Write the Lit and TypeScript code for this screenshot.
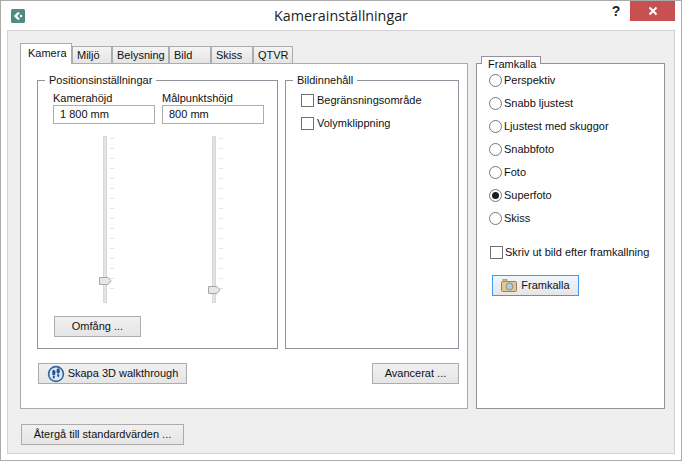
import { LitElement, html, svg, css, nothing } from "lit";
import { customElement } from "lit/decorators.js";

const TICKS = Array.from({ length: 16 }, (_, i) => i);

@customElement("app-root")
export class AppRoot extends LitElement {
  static styles = css`
    :host { display: block; width: 682px; height: 461px; box-sizing: border-box; background: #fff;
      border: 1px solid #ababab; font: 11px/15px "Liberation Sans", Arial, sans-serif; color: #111; overflow: hidden; }
    * { box-sizing: border-box; }
    .window { height: 100%; display: flex; flex-direction: column; }
    .titlebar { height: 29px; display: flex; align-items: flex-start; padding-left: 10px; flex: none; }
    .appicon { margin-top: 8px; flex: none; display: block; }
    .title { flex: 1; text-align: center; font: 14.3px/20px "Open Sans", sans-serif; margin-top: 5px; padding-left: 48px; color: #222; }
    .help { width: 14px; margin-top: 2px; margin-right: 7px; font: bold 14px/16px "Liberation Sans", sans-serif; text-align: center; color: #222; }
    .close { width: 45px; height: 20px; margin-right: 6px; background: #c75050; display: flex; align-items: center; justify-content: center; }
    .client { flex: 1; margin: 0 6px 6px 6px; border: 1px solid #d2d2d2; background: #efefef; padding: 12px 9px 7px 12px; display: flex; flex-direction: column; }
    .top { display: flex; gap: 8px; height: 366px; }
    .tabs { width: 448px; display: flex; flex-direction: column; }
    .tabbar { display: flex; height: 20px; align-items: flex-end; position: relative; z-index: 1; }
    .tab { height: 17px; border: 1px solid #acacac; border-bottom: none; background: linear-gradient(#f4f4f4, #e4e4e4); padding-left: 4px; line-height: 17px; flex: none; }
    .tab.active { height: 21px; margin: 0 0 -1px 0; background: #fff; padding-left: 7px; line-height: 19px; }
    .pane { flex: 1; background: #fff; border: 1px solid #acacac; padding: 16px 8px 0 16px; display: flex; flex-direction: column; }
    .groups { display: flex; gap: 7px; height: 269px; }
    .group { position: relative; border: 1px solid #92929c; flex: none; }
    .legend { position: absolute; top: -8px; background: #fff; padding: 0 4px; white-space: nowrap; }
    .pos { width: 241px; padding: 15px 0 0 15px; }
    .pos .legend { left: 7px; }
    .content { width: 174px; padding: 13px 0 0 15px; }
    .content .legend { left: 7px; }
    .fields { display: flex; gap: 7px; }
    .field { width: 102px; }
    .field label { display: block; height: 9px; line-height: 15px; position: relative; top: -5px; }
    .input { height: 19px; border: 1px solid #acacac; padding-left: 6px; line-height: 17px; }
    .slider { height: 167px; margin-top: 12px; position: relative; }
    .track { position: absolute; left: 50px; top: 0; bottom: 0; width: 4px; background: #e3e3e3; border: 1px solid #d8d8d8; }
    .ticks { position: absolute; left: 57px; top: 2px; display: flex; flex-direction: column; gap: 9px; }
    .tick { width: 4px; height: 1px; background: #e4e4ea; }
    .thumb { position: absolute; left: 46px; display: block; }
    .btn { height: 21px; border: 1px solid #acacac; background: linear-gradient(#f0f0f0, #e5e5e5); display: flex; align-items: center; justify-content: center; gap: 3px; white-space: nowrap; flex: none; }
    .omfang { width: 87px; margin: 13px 0 0 1px; }
    .check { display: flex; align-items: center; gap: 3px; height: 13px; white-space: nowrap; }
    .box { width: 13px; height: 13px; border: 1px solid #707070; background: #fff; flex: none; }
    .content .check { margin-bottom: 10px; }
    .actions { display: flex; justify-content: space-between; margin-top: 14px; padding-left: 1px; }
    .walk { width: 149px; }
    .adv { width: 87px; }
    .side { width: 189px; position: relative; display: flex; flex-direction: column; }
    .sidetab { position: absolute; left: 5px; top: 13px; width: 60px; height: 8px; padding-left: 6px; background: #fff; border: 1px solid #92929c; border-bottom: none; line-height: 15px; z-index: 1; }
    .sidepane { margin-top: 20px; flex: 1; background: #fff; border: 1px solid #92929c; padding: 10px 0 0 12px; }
    .radio { display: flex; align-items: center; gap: 2px; height: 13px; margin-bottom: 10px; white-space: nowrap; }
    .print { margin: 21px 0 16px 1px; gap: 2px; }
    .render { width: 87px; margin-left: 3px; border-color: #3c9af0; background: linear-gradient(#f0f6fc, #e6e6e6); gap: 4px; }
    .reset { width: 163px; margin: 15px 0 0 1px; }
  `;

  private slider(thumbTop: number) {
    return html`<div class="slider">
      <div class="track"></div>
      <div class="ticks">${TICKS.map(() => html`<div class="tick"></div>`)}</div>
      <svg class="thumb" style="top:${thumbTop}px" width="13" height="8" viewBox="0 0 13 8">
        <path d="M.5.5H9L12 3.8 9 7.5H.5Z" fill="#e6e6e6" stroke="#a8a8a8"/>
      </svg>
    </div>`;
  }

  private radio(label: string, on = false) {
    return html`<div class="radio">
      <svg width="13" height="13" viewBox="0 0 13 13" style="flex:none">
        <circle cx="6.5" cy="6.5" r="6" fill="#fff" stroke="#777"/>
        ${on ? svg`<circle cx="6.5" cy="6.5" r="3.5" fill="#1c1c1c"/>` : nothing}
      </svg>
      <span>${label}</span>
    </div>`;
  }

  render() {
    const tabs = [["Miljö", 40], ["Belysning", 57], ["Bild", 42], ["Skiss", 42], ["QTVR", 40]] as const;
    return html`<div class="window">
      <div class="titlebar">
        <svg class="appicon" width="14" height="14" viewBox="0 0 14 14">
          <rect width="14" height="14" rx="1.5" fill="#4f8a84"/>
          <path d="M8 3.5 4.5 7 8 10.5" fill="none" stroke="#fff" stroke-width="2.4"/>
          <circle cx="10" cy="7" r="1.2" fill="#fff"/>
        </svg>
        <div class="title">Kamerainställningar</div>
        <div class="help">?</div>
        <div class="close">
          <svg width="10" height="10" viewBox="0 0 10 10"><path d="M1.5 1.5 8.5 8.5M8.5 1.5 1.5 8.5" stroke="#fff" stroke-width="2"/></svg>
        </div>
      </div>
      <div class="client">
        <div class="top">
          <div class="tabs">
            <div class="tabbar">
              <div class="tab active" style="width:52px">Kamera</div>
              ${tabs.map(([t, w]) => html`<div class="tab" style="width:${w}px">${t}</div>`)}
            </div>
            <div class="pane">
              <div class="groups">
                <div class="group pos">
                  <div class="legend">Positionsinställningar</div>
                  <div class="fields">
                    <div class="field"><label>Kamerahöjd</label><div class="input">1 800 mm</div>${this.slider(141)}</div>
                    <div class="field"><label>Målpunktshöjd</label><div class="input">800 mm</div>${this.slider(150)}</div>
                  </div>
                  <div class="btn omfang">Omfång ...</div>
                </div>
                <div class="group content">
                  <div class="legend">Bildinnehåll</div>
                  <div class="check"><div class="box"></div><span>Begränsningsområde</span></div>
                  <div class="check"><div class="box"></div><span>Volymklippning</span></div>
                </div>
              </div>
              <div class="actions">
                <div class="btn walk">
                  <svg width="18" height="18" viewBox="0 0 18 18">
                    <circle cx="9" cy="9" r="7.4" fill="#dfe9f3" stroke="#2f689f" stroke-width="1.6"/>
                    <ellipse cx="6.8" cy="7.5" rx="1.7" ry="2.8" fill="#22568c"/>
                    <rect x="5.8" y="10.5" width="2" height="3" rx="1" fill="#22568c"/>
                    <ellipse cx="11.2" cy="6" rx="1.7" ry="2.8" fill="#22568c"/>
                    <rect x="10.2" y="9" width="2" height="3" rx="1" fill="#22568c"/>
                  </svg>
                  <span>Skapa 3D walkthrough</span>
                </div>
                <div class="btn adv">Avancerat ...</div>
              </div>
            </div>
          </div>
          <div class="side">
            <div class="sidetab">Framkalla</div>
            <div class="sidepane">
              ${this.radio("Perspektiv")}
              ${this.radio("Snabb ljustest")}
              ${this.radio("Ljustest med skuggor")}
              ${this.radio("Snabbfoto")}
              ${this.radio("Foto")}
              ${this.radio("Superfoto", true)}
              ${this.radio("Skiss")}
              <div class="check print"><div class="box"></div><span>Skriv ut bild efter framkallning</span></div>
              <div class="btn render">
                <svg width="16" height="13" viewBox="0 0 16 13">
                  <rect x=".5" y="2.5" width="15" height="10" rx="1" fill="#e2c88c" stroke="#9a8350"/>
                  <rect x="2" y=".5" width="4" height="2" fill="#cfb77d" stroke="#9a8350" stroke-width=".6"/>
                  <circle cx="8.5" cy="7.5" r="3.4" fill="#a9cbe6" stroke="#8a8f94"/>
                </svg>
                <span>Framkalla</span>
              </div>
            </div>
          </div>
        </div>
        <div class="btn reset">Återgå till standardvärden ...</div>
      </div>
    </div>`;
  }
}
